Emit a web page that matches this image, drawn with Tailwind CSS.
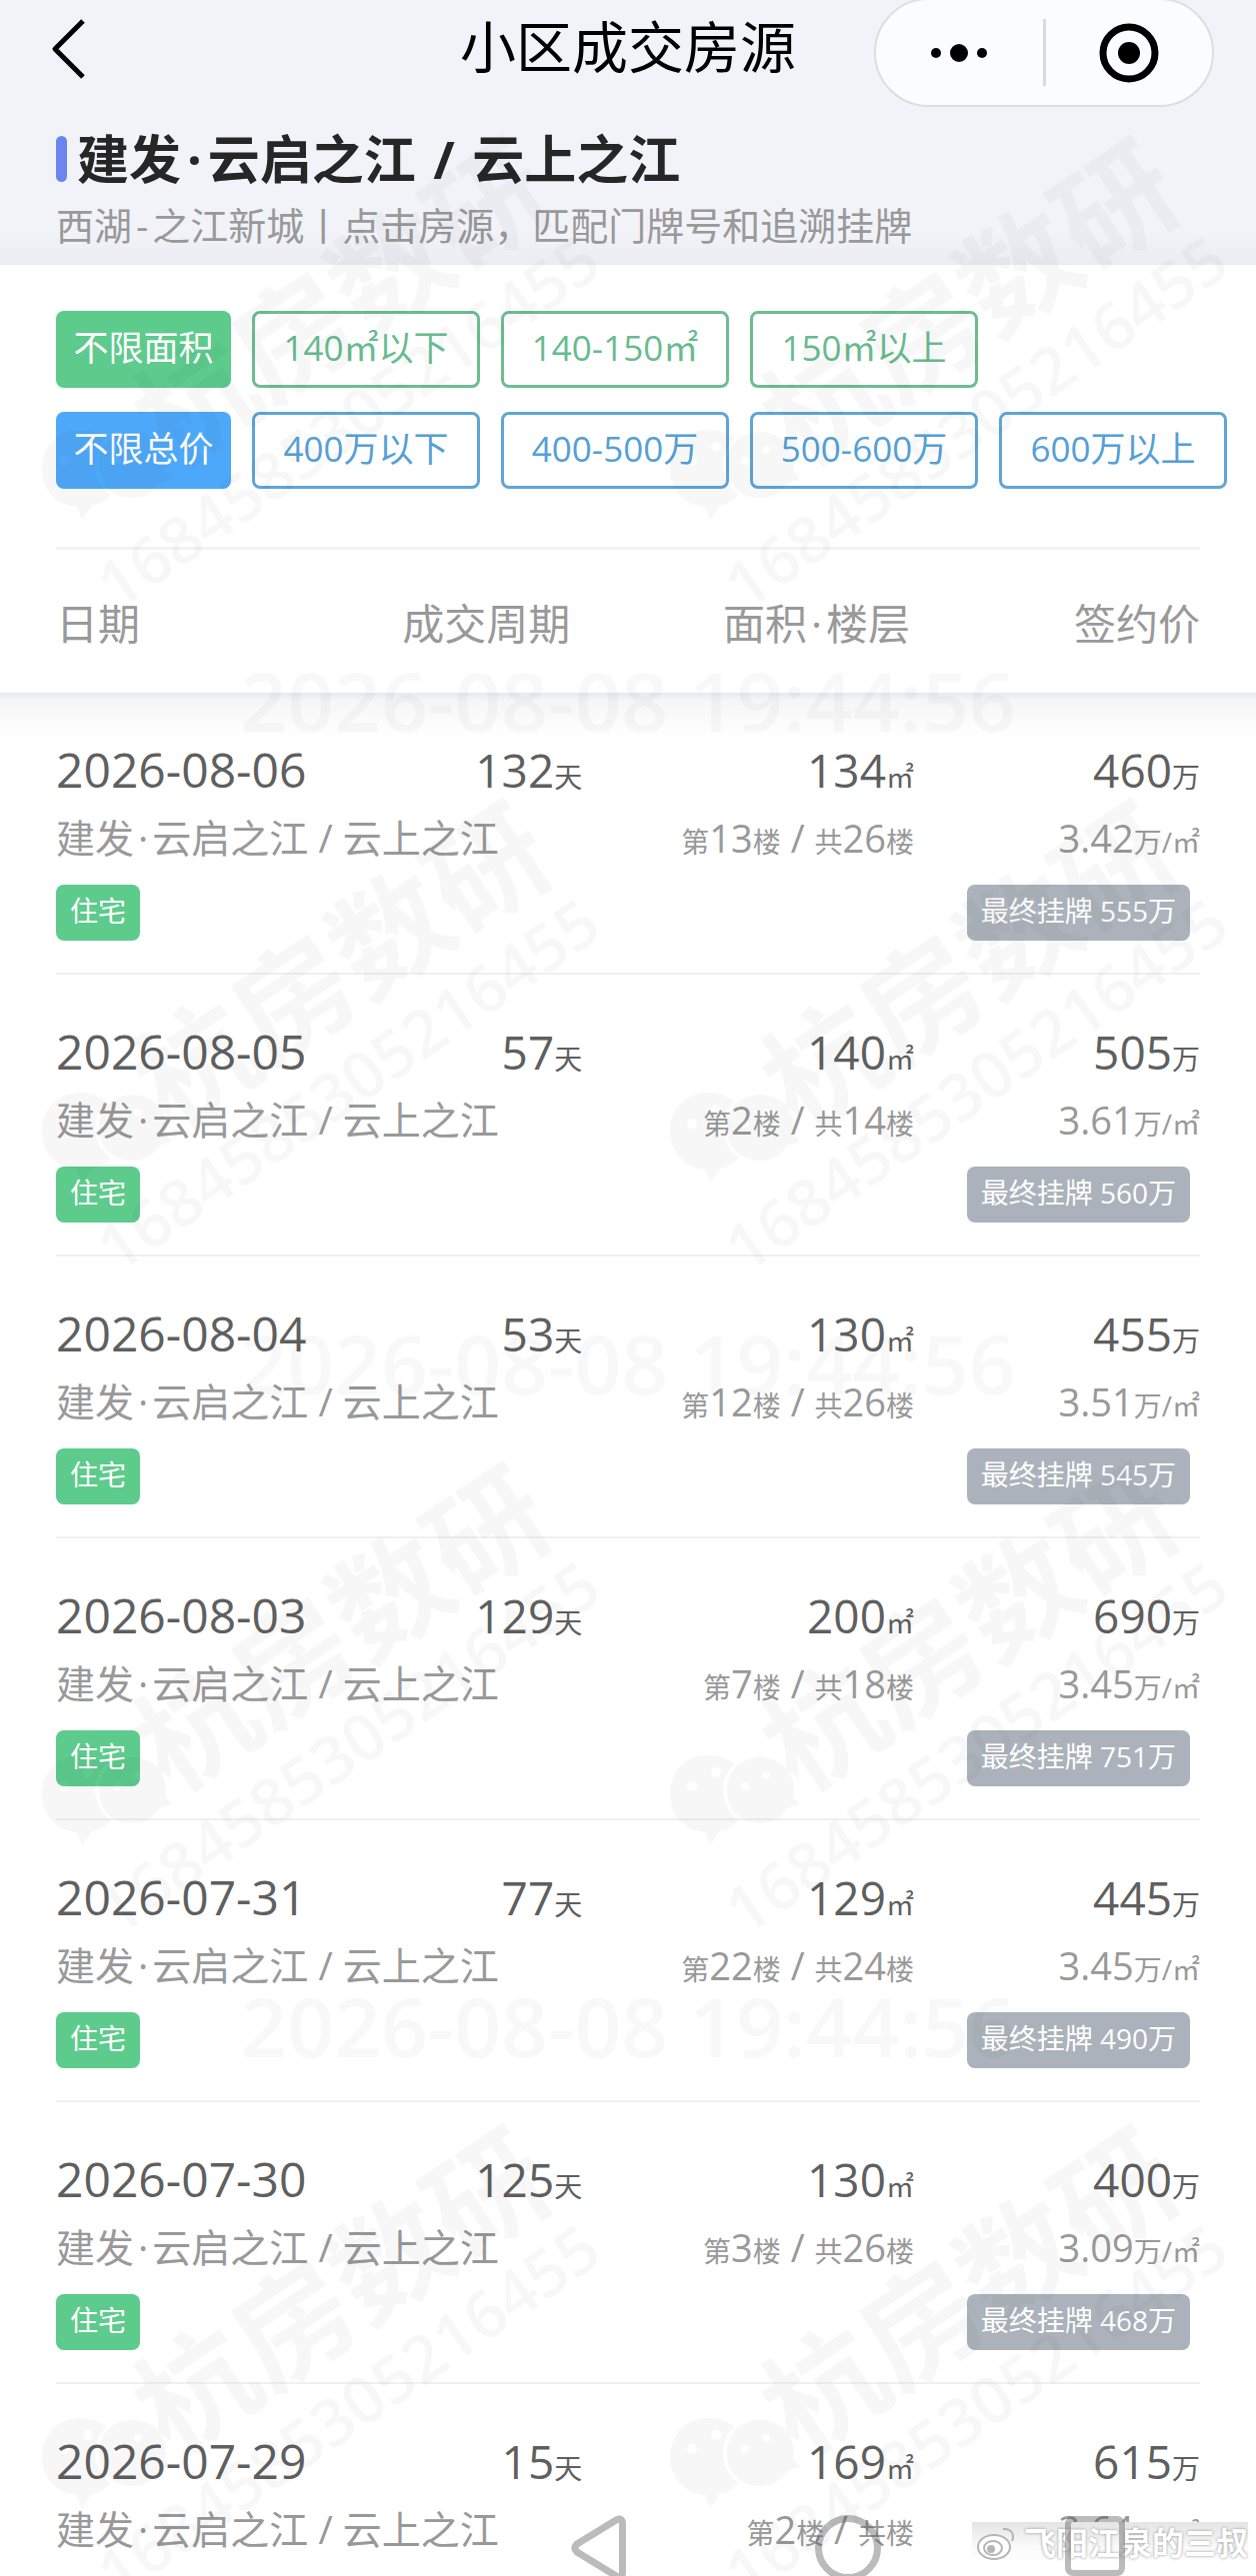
<!DOCTYPE html>
<html lang="zh-CN">
<head>
    <meta charset="UTF-8">
    <meta name="viewport" content="width=device-width, initial-scale=1.0">
    <title>小区成交房源</title>
    <script src="https://cdn.jsdelivr.net/npm/@tailwindcss/browser@4"></script>
</head>
<body class="relative h-screen overflow-hidden bg-white font-['Open_Sans','Noto_Sans_CJK_SC',sans-serif] text-[#5f5f5f]">

    <!-- Page header -->
    <header class="bg-[linear-gradient(to_top,#e9ecf0,#f2f3f9_32px)] pb-3">
        <div class="relative flex h-[108px] items-center justify-center">
            <button type="button" aria-label="返回" class="absolute top-4 left-12">
                <svg class="h-16 w-10" viewBox="0 0 40 64" fill="none" stroke="#000" stroke-width="5" stroke-linejoin="round">
                    <path d="M35 5 L7 33 L35 61" />
                </svg>
            </button>
            <h1 class="pb-4 text-[56px] leading-[72px] text-black">小区成交房源</h1>
            <div class="absolute -top-0.5 right-[42px] flex h-[109px] w-[340px] items-center rounded-full border-2 border-[#dddee2] bg-[#fbfcfe]">
                <button type="button" aria-label="更多" class="flex flex-1 justify-center">
                    <svg class="h-5 w-14" viewBox="0 0 56 20">
                        <circle cx="5" cy="10" r="5" />
                        <circle cx="28" cy="10" r="9" />
                        <circle cx="51" cy="10" r="5" />
                    </svg>
                </button>
                <span class="h-[67px] w-[3px] bg-[#dadadc]"></span>
                <button type="button" aria-label="关闭" class="flex flex-1 justify-center">
                    <svg class="size-15" viewBox="0 0 60 60">
                        <circle cx="30" cy="30" r="26" fill="none" stroke="#000" stroke-width="7" />
                        <circle cx="30" cy="30" r="11" />
                    </svg>
                </button>
            </div>
        </div>
        <div class="px-14 pt-[17px]">
            <h2 class="flex items-center gap-2.5 text-[52px] leading-[68px] font-bold text-[#262626]">
                <span class="h-[46px] w-[11px] rounded-full bg-[#6b84f0]"></span>
                <span>建发<span class="mx-1.5">·</span>云启之江<span class="mx-1"> / </span>云上之江</span>
            </h2>
            <p class="pt-1 text-[38px] leading-[56px] text-[#999]">西湖<span class="mx-1">-</span>之江新城丨点击房源，匹配门牌号和追溯挂牌</p>
        </div>
    </header>

    <!-- Filters -->
    <section class="flex flex-col gap-6 bg-white px-14 pt-[46px] pb-[58px] text-[35px] leading-[66px]">
        <div class="flex gap-[21px] text-[#68bb8f]">
            <button type="button" class="h-[77px] w-[175px] shrink-0 rounded-lg bg-[#5dcb8c] pb-1 text-white">不限面积</button>
            <button type="button" class="h-[77px] w-[228px] shrink-0 rounded-lg border-3 border-[#6cbd92] pb-1">140㎡以下</button>
            <button type="button" class="h-[77px] w-[228px] shrink-0 rounded-lg border-3 border-[#6cbd92] pb-1">140-150㎡</button>
            <button type="button" class="h-[77px] w-[228px] shrink-0 rounded-lg border-3 border-[#6cbd92] pb-1">150㎡以上</button>
        </div>
        <div class="flex gap-[21px] text-[#559fd8]">
            <button type="button" class="h-[77px] w-[175px] shrink-0 rounded-lg bg-[#4da8f9] pb-1 text-white">不限总价</button>
            <button type="button" class="h-[77px] w-[228px] shrink-0 rounded-lg border-3 border-[#5fa5d8] pb-1">400万以下</button>
            <button type="button" class="h-[77px] w-[228px] shrink-0 rounded-lg border-3 border-[#5fa5d8] pb-1">400-500万</button>
            <button type="button" class="h-[77px] w-[228px] shrink-0 rounded-lg border-3 border-[#5fa5d8] pb-1">500-600万</button>
            <button type="button" class="h-[77px] w-[228px] shrink-0 rounded-lg border-3 border-[#5fa5d8] pb-1">600万以上</button>
        </div>
    </section>

    <!-- Deals, the gradient is the shade under the column heads -->
    <main class="bg-[linear-gradient(to_bottom,#fff_146px,#e6e9eb_146px,#f6f6f7_154px,#fff_190px)] px-14">
        <table class="w-full table-fixed border-separate border-spacing-0 whitespace-nowrap">
            <thead>
                <tr class="text-right text-[42px] text-[#999] *:h-[146px] *:border-t-3 *:border-[#f3f3f3] *:pt-1 *:font-normal">
                    <th class="w-[30%] text-left">日期</th>
                    <th class="w-[16%] pr-3">成交周期</th>
                    <th class="w-[29%] pr-1">面积<span class="mx-1">·</span>楼层</th>
                    <th class="w-[25%]">签约价</th>
                </tr>
            </thead>
            <tbody id="deals"></tbody>
        </table>
    </main>

    <!-- Watermark -->
    <svg class="pointer-events-none absolute inset-0 h-full w-full" fill="#000" aria-hidden="true">
        <defs>
            <pattern id="mark" x="0" y="27" width="628" height="663" patternUnits="userSpaceOnUse">
                <mask id="big">
                    <rect width="628" height="663" fill="#fff" />
                    <circle cx="132" cy="438" r="37" fill="#000" />
                    <circle cx="64" cy="434" r="5" fill="#000" />
                    <circle cx="88" cy="420" r="5" fill="#000" />
                </mask>
                <mask id="small">
                    <rect width="628" height="663" fill="#fff" />
                    <circle cx="117" cy="434" r="4" fill="#000" />
                    <circle cx="138" cy="423" r="4" fill="#000" />
                </mask>
                <path mask="url(#big)" d="M80 403 C103 403 120 419 120 441 C120 463 106 477 92 479 L82 493 L77 480 C55 478 42 462 42 442 C42 419 58 403 80 403 Z" />
                <path mask="url(#small)" d="M132 405 C152 405 166 419 166 437 L165 444 L172 452 L159 456 C153 466 144 471 132 471 C112 471 99 457 99 438 C99 419 112 405 132 405 Z" />
                <g transform="translate(194 374) rotate(-34)">
                    <text x="-57" y="45" font-size="117" font-weight="700">杭房数研</text>
                </g>
                <g transform="translate(120 557) rotate(-35)">
                    <text x="-18" y="22" font-size="65" font-weight="600">1684585305216455</text>
                </g>
            </pattern>
        </defs>
        <rect width="100%" height="100%" fill="url(#mark)" opacity="0.03" />
        <g font-size="82" font-weight="600" text-anchor="middle" opacity="0.022">
            <text x="50%" y="732">2026-08-08 19:44:56</text>
            <text x="50%" y="1395">2026-08-08 19:44:56</text>
            <text x="50%" y="2058">2026-08-08 19:44:56</text>
        </g>
    </svg>

    <!-- Author's signature over the last row -->
    <div class="absolute right-2 bottom-3 flex h-[42px] items-center gap-2 bg-[linear-gradient(to_bottom,#e4e4e4,#fafafa_60%,#fff)] pl-1 text-[32px] leading-[42px] font-bold text-white [text-shadow:0_0_3px_#8a8a8a]">
        <svg class="h-9 w-10" viewBox="0 0 40 36" fill="none" stroke="#b5b5b5" stroke-width="2">
            <ellipse cx="18" cy="22" rx="16" ry="12" fill="#fff" />
            <ellipse cx="17" cy="23" rx="9" ry="7" />
            <circle cx="15" cy="24" r="3" fill="#b5b5b5" />
            <path d="M27 4 C35 3 39 9 36 16" />
        </svg>
        <span>飞阳江泉的三叔</span>
    </div>

    <!-- System navigation keys -->
    <nav class="absolute right-[131px] -bottom-1.5 flex gap-[184px] text-[#555]/40">
        <button type="button" aria-label="后退">
            <svg class="h-[68px] w-15" viewBox="0 0 60 68" fill="none" stroke="currentColor" stroke-width="7" stroke-linejoin="round">
                <path d="M46 5.500 Q51.500 3.500 51.500 10 L51.500 58 Q51.500 64.500 46 62.500 L6 38 Q2 34 6 30 Z" />
            </svg>
        </button>
        <button type="button" aria-label="主页">
            <svg class="h-[68px] w-[66px]" viewBox="0 0 66 68" fill="none" stroke="currentColor" stroke-width="7">
                <circle cx="33" cy="34" r="29.500" />
            </svg>
        </button>
        <button type="button" aria-label="最近任务">
            <svg class="h-[68px] w-15" viewBox="0 0 60 68" fill="none" stroke="currentColor" stroke-width="6">
                <rect x="3" y="5" width="54" height="54" rx="5" />
            </svg>
        </button>
    </nav>

    <script>
        const name = '建发<span class="mx-1">·</span>云启之江 / 云上之江';

        const deals = [
            { date: '2026-08-06', days: 132, area: 134, floor: 13, floors: 26, total: 460, unit: '3.42', listed: 555 },
            { date: '2026-08-05', days: 57, area: 140, floor: 2, floors: 14, total: 505, unit: '3.61', listed: 560 },
            { date: '2026-08-04', days: 53, area: 130, floor: 12, floors: 26, total: 455, unit: '3.51', listed: 545 },
            { date: '2026-08-03', days: 129, area: 200, floor: 7, floors: 18, total: 690, unit: '3.45', listed: 751 },
            { date: '2026-07-31', days: 77, area: 129, floor: 22, floors: 24, total: 445, unit: '3.45', listed: 490 },
            { date: '2026-07-30', days: 125, area: 130, floor: 3, floors: 26, total: 400, unit: '3.09', listed: 468 },
            { date: '2026-07-29', days: 15, area: 169, floor: 2, floors: '', total: 615, unit: '3.64', listed: 640 },
        ];

        const small = (text) => `<span class="text-[28px] leading-none">${text}</span>`;

        document.getElementById('deals').innerHTML = deals.map(d => `
            <tr class="text-right align-top text-[46px] leading-[60px] *:border-b-2 *:border-[#f0f0f0] *:pt-[47px] *:pb-8">
                <td class="text-left">
                    <div class="text-[48px]">${d.date}</div>
                    <div class="mt-2 text-[39px] text-[#999]">${name}</div>
                    <div class="mt-[17px] flex"><span class="h-14 rounded-lg bg-[#5dcb8c] px-3.5 text-[28px] leading-[52px] text-white">住宅</span></div>
                </td>
                <td>${d.days}${small('天')}</td>
                <td>
                    <div>${d.area}${small('㎡')}</div>
                    <div class="mt-2 text-[38px] text-[#999]">${small('第')}${d.floor}${small('楼')} / ${small('共')}${d.floors}${small('楼')}</div>
                </td>
                <td>
                    <div>${d.total}${small('万')}</div>
                    <div class="mt-2 text-[38px] text-[#999]">${d.unit}${small('万/㎡')}</div>
                    <div class="mt-[17px] mr-2.5 flex justify-end"><span class="h-14 rounded-lg bg-[#abb2bb] px-3.5 text-[28px] leading-[52px] text-white">最终挂牌 ${d.listed}万</span></div>
                </td>
            </tr>`).join('');
    </script>
</body>
</html>
